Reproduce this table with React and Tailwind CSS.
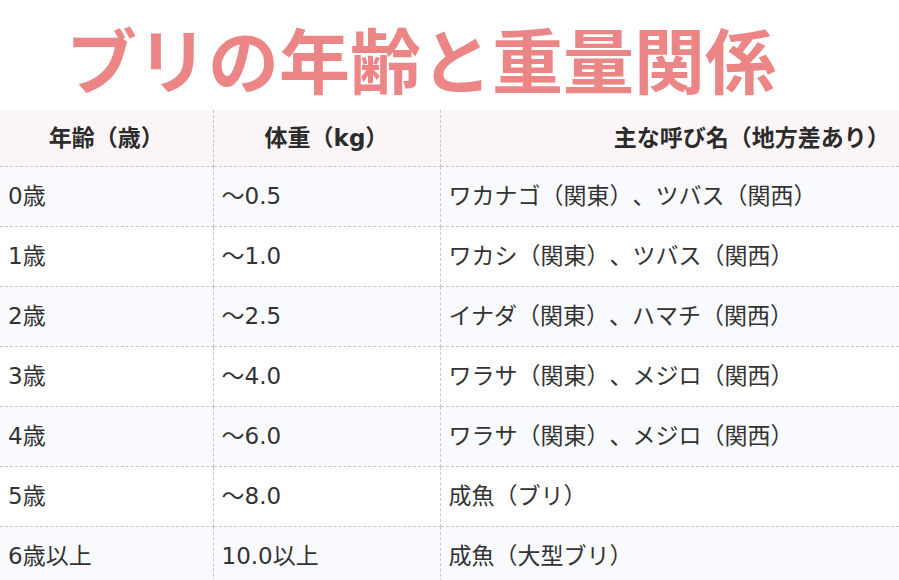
import React from "react";

const rows = [
  ["0歳", "～0.5", "ワカナゴ（関東）、ツバス（関西）"],
  ["1歳", "～1.0", "ワカシ（関東）、ツバス（関西）"],
  ["2歳", "～2.5", "イナダ（関東）、ハマチ（関西）"],
  ["3歳", "～4.0", "ワラサ（関東）、メジロ（関西）"],
  ["4歳", "～6.0", "ワラサ（関東）、メジロ（関西）"],
  ["5歳", "～8.0", "成魚（ブリ）"],
  ["6歳以上", "10.0以上", "成魚（大型ブリ）"],
];

export default function App() {
  return (
    <div
      className="w-[899px] h-[580px] overflow-hidden bg-white text-[#333] [text-spacing-trim:space-all]"
      style={{ fontFamily: '"DejaVu Sans", "Noto Sans CJK JP", sans-serif' }}
    >
      <h1
        className="h-[110px] pl-[66px] pt-[12px] text-[71px] leading-[90px] font-bold text-[#ec8686] whitespace-nowrap"
        style={{ fontFamily: '"Noto Sans CJK JP", sans-serif' }}
      >
        ブリの年齢と重量関係
      </h1>
      <table className="w-[1064px] border-collapse table-fixed">
        <colgroup>
          <col className="w-[213px]" />
          <col className="w-[227px]" />
          <col />
        </colgroup>
        <thead>
          <tr className="h-[56px] bg-[#fcf5f7]">
            <th className="border border-dashed border-[#c8c8c8] border-t-0 border-l-0 text-[23px] font-bold text-[#2b2b2b]">
              年齢（歳）
            </th>
            <th className="border border-dashed border-[#c8c8c8] border-t-0 text-[23px] font-bold text-[#2b2b2b]">
              体重（kg）
            </th>
            <th className="border border-dashed border-[#c8c8c8] border-t-0 text-[23px] font-bold text-[#2b2b2b]">
              主な呼び名（地方差あり）
            </th>
          </tr>
        </thead>
        <tbody>
          {rows.map((r, i) => (
            <tr key={i} className={i % 2 === 0 ? "h-[60px] bg-[#f8fafd]" : "h-[60px] bg-white"}>
              <td className="border border-dashed border-[#c8c8c8] border-l-0 pl-[8px] text-[23px]">
                {r[0]}
              </td>
              <td className="border border-dashed border-[#c8c8c8] pl-[8px] text-[23px]">
                {r[1]}
              </td>
              <td className="border border-dashed border-[#c8c8c8] pl-[8px] text-[23px] whitespace-nowrap">
                {r[2]}
              </td>
            </tr>
          ))}
        </tbody>
      </table>
    </div>
  );
}
